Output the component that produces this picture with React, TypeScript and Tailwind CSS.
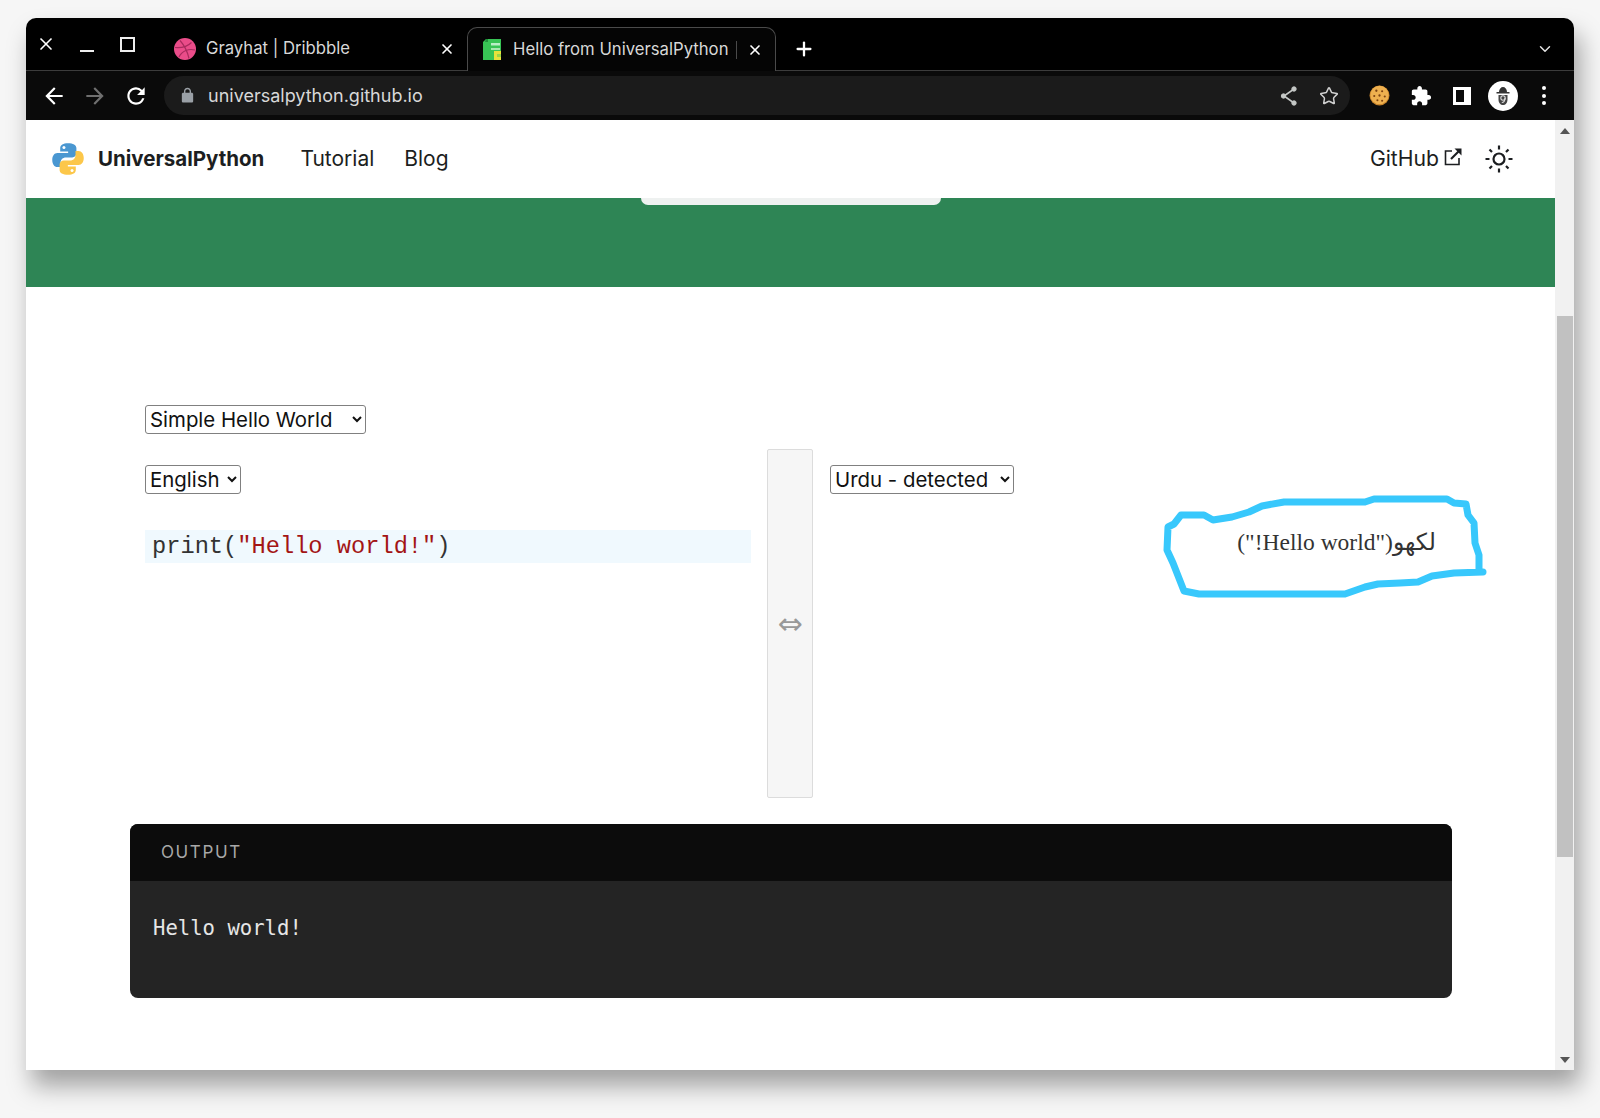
import { ChevronDown, Plus, Star, X } from "lucide-react";

function BackIcon({ className }: { className: string }) {
  return (
    <svg viewBox="0 0 24 24" className={className} fill="currentColor">
      <path d="M20 11H7.83l5.59-5.59L12 4l-8 8 8 8 1.41-1.41L7.83 13H20v-2z" />
    </svg>
  );
}

function ForwardIcon({ className }: { className: string }) {
  return (
    <svg viewBox="0 0 24 24" className={className} fill="currentColor">
      <path d="M12 4l-1.41 1.41L16.17 11H4v2h12.17l-5.58 5.59L12 20l8-8z" />
    </svg>
  );
}

function ReloadIcon({ className }: { className: string }) {
  return (
    <svg viewBox="0 0 24 24" className={className} fill="currentColor">
      <path d="M17.65 6.35A7.958 7.958 0 0 0 12 4c-4.42 0-7.99 3.58-7.99 8s3.57 8 7.99 8c3.73 0 6.84-2.55 7.73-6h-2.08A5.99 5.99 0 0 1 12 18c-3.31 0-6-2.69-6-6s2.69-6 6-6c1.66 0 3.14.69 4.22 1.78L13 11h7V4l-2.35 2.35z" />
    </svg>
  );
}

function LockIcon() {
  return (
    <svg viewBox="0 0 24 24" className="h-[17px] w-[17px] text-[#9aa0a6]" fill="currentColor">
      <path d="M18 8h-1V6c0-2.76-2.24-5-5-5S7 3.24 7 6v2H6c-1.1 0-2 .9-2 2v10c0 1.1.9 2 2 2h12c1.1 0 2-.9 2-2V10c0-1.1-.9-2-2-2zM9 8V6c0-1.66 1.34-3 3-3s3 1.34 3 3v2H9z" />
    </svg>
  );
}

function ShareIcon() {
  return (
    <svg viewBox="0 0 24 24" className="h-6 w-6 text-[#c4c7c5]" fill="currentColor" stroke="currentColor">
      <path d="M17 5 7 12l10 7" fill="none" strokeWidth="1.6" />
      <circle cx="17" cy="5" r="2.2" />
      <circle cx="6.5" cy="12" r="2.2" />
      <circle cx="17" cy="19" r="2.2" />
    </svg>
  );
}

function PuzzleIcon() {
  return (
    <svg viewBox="0 0 24 24" className="h-[22px] w-[22px] text-white" fill="currentColor">
      <path d="M20.5 11H19V7c0-1.1-.9-2-2-2h-4V3.5C13 2.12 11.88 1 10.5 1S8 2.12 8 3.5V5H4c-1.1 0-1.99.9-1.99 2v3.8H3.5c1.49 0 2.7 1.21 2.7 2.7s-1.21 2.7-2.7 2.7H2V20c0 1.1.9 2 2 2h3.8v-1.5c0-1.49 1.21-2.7 2.7-2.7 1.49 0 2.7 1.21 2.7 2.7V22H17c1.1 0 2-.9 2-2v-4h1.5c1.38 0 2.5-1.12 2.5-2.5S21.88 11 20.5 11z" />
    </svg>
  );
}

function CookieIcon() {
  return (
    <svg viewBox="0 0 20 20" className="h-[21px] w-[21px]">
      <circle cx="10" cy="10" r="9.5" fill="#c9852c" />
      <circle cx="10" cy="9.500" r="8.700" fill="#eeb04f" />
      <g fill="#7d4312">
        <circle cx="7" cy="5.500" r="1.100" />
        <circle cx="12.500" cy="6" r="1" />
        <circle cx="5" cy="10.500" r="1" />
        <circle cx="10" cy="10" r="1.100" />
        <circle cx="15" cy="11" r="1" />
        <circle cx="8" cy="14.500" r="1" />
        <circle cx="12.500" cy="15" r="1" />
      </g>
    </svg>
  );
}

function AvatarIcon() {
  return (
    <svg viewBox="0 0 30 30" className="h-[30px] w-[30px]">
      <circle cx="15" cy="15" r="15" fill="#fff" />
      <path d="M11 11c0-3 2-5 4-5s4 2 4 5h2.500v1.600h-13V11z" fill="#333" />
      <path d="M10.500 14h9v4.500c0 3.500-2 5.500-4.500 5.500s-4.500-2-4.500-5.500z" fill="#444" />
      <circle cx="15" cy="17" r="2.200" fill="none" stroke="#ddd" strokeWidth="1.100" />
      <path d="M17 17c0 3-1 4.500-3.200 4.500" fill="none" stroke="#ddd" strokeWidth="1.100" />
    </svg>
  );
}

function DribbbleIcon() {
  return (
    <svg viewBox="0 0 22 22" className="h-[22px] w-[22px]" fill="none">
      <circle cx="11" cy="11" r="11" fill="#ea4c89" />
      <g stroke="#a82a5d" strokeWidth="1.200">
        <path d="M6 2.500c4 4.500 7.500 11 9 18" />
        <path d="M1 9.500c6 .5 12-.5 16.500-5" />
        <path d="M21 12c-6-1.500-13 .5-16 7" />
      </g>
    </svg>
  );
}

function BookIcon() {
  return (
    <svg viewBox="0 0 20 21" className="h-[21px] w-[20px]">
      <path d="M1 3 4 0h15v21H1z" fill="#38c455" />
      <path d="M4 0h2v3H3z" fill="#1f8f3a" />
      <path d="M9 4h9v2.500H9z" fill="#b9eec6" />
      <path d="M9 9h9v2H9z" fill="#a8e8b0" />
      <path d="M12 12h7v9h-7z" fill="#e6e23c" />
      <path d="M15 15h4v3h-4z" fill="#9ad648" />
    </svg>
  );
}

function PythonLogo() {
  return (
    <svg viewBox="0 0 24 24" className="h-[36px] w-[36px]">
      <path
        d="M12 1.500c-3.200 0-5.200 1.100-5.200 3.200v2.300h5.300v1H4.900C2.900 8 1.500 9.900 1.500 12.600s1.400 4.700 3.400 4.700h2.100v-2.800c0-2 1.600-3.500 3.500-3.500h4.300c1.600 0 2.800-1.300 2.800-2.800V4.700c0-2.100-2.200-3.200-5.600-3.200z"
        fill="#4a97d1"
      />
      <path
        d="M12 22.500c3.200 0 5.200-1.100 5.200-3.200V17h-5.300v-1h7.200c2 0 3.400-1.900 3.400-4.600s-1.400-4.700-3.400-4.700H17v2.800c0 2-1.600 3.500-3.500 3.500H9.200c-1.600 0-2.800 1.300-2.800 2.800v3.500c0 2.100 2.200 3.200 5.600 3.200z"
        fill="#fcc74a"
      />
      <circle cx="9.300" cy="4.400" r="1" fill="#fff" />
      <circle cx="14.700" cy="19.600" r="1" fill="#fff" />
    </svg>
  );
}

function ExternalIcon() {
  return (
    <svg viewBox="0 0 20 20" className="h-[20px] w-[20px] text-[#1c1e21]" fill="none" stroke="currentColor">
      <path d="M9 4H2.500v13.500H16V11" strokeWidth="1.600" />
      <path d="M8 12 17 3" strokeWidth="2.200" />
      <path d="M11.500 1.500h7v7z" fill="currentColor" stroke="none" />
    </svg>
  );
}

function ThemeSun() {
  return (
    <svg viewBox="0 0 30 30" className="h-[30px] w-[30px] text-[#1c1e21]" fill="none" stroke="currentColor" strokeWidth="2.200">
      <circle cx="15" cy="15" r="5.500" />
      <path d="M15 1.500v4M15 24.500v4M1.500 15h4M24.500 15h4M5.500 5.500l2.500 2.500M22 22l2.500 2.500M5.500 24.500 8 22M22 8l2.500-2.500" />
    </svg>
  );
}

function TabStrip() {
  return (
    <div className="flex h-[53px] items-end border-b border-[#3c3c3c] bg-black text-white">
      <div className="flex h-full items-center pl-[10px]">
        <X className="h-[20px] w-[20px]" strokeWidth={2} />
        <div className="ml-[24px] mt-[14px] h-[2px] w-[14px] bg-[#eee]" />
        <div className="ml-[26px] h-[15px] w-[15px] border-2 border-[#eee]" />
      </div>
      <div className="ml-[39px] flex h-[43px] w-[293px] items-center">
        <DribbbleIcon />
        <span className="ml-[10px] text-[16.700px] text-[#d8d8d8]">Grayhat | Dribbble</span>
        <X className="ml-auto mr-[12px] h-[16px] w-[16px]" strokeWidth={2.500} />
      </div>
      <div className="relative -mb-px flex h-[44px] w-[309px] items-center rounded-t-[10px] border border-b-0 border-[#4a4a4a] bg-[#050505] pl-[14px]">
        <BookIcon />
        <span className="ml-[11px] w-[218px] overflow-hidden whitespace-nowrap text-[16.700px] text-[#d8d8d8]">
          Hello from UniversalPython
        </span>
        <div className="ml-[5px] h-[18px] w-px bg-[#4a4a4a]" />
        <X className="ml-[10px] h-[16px] w-[16px]" strokeWidth={2.500} />
      </div>
      <div className="ml-[17px] flex h-[43px] items-center">
        <Plus className="h-[22px] w-[22px]" strokeWidth={2.500} />
      </div>
      <div className="ml-auto mr-[20px] flex h-[43px] items-center">
        <ChevronDown className="h-[18px] w-[18px] text-[#e0e0e0]" strokeWidth={2} />
      </div>
    </div>
  );
}

function Toolbar() {
  return (
    <div className="flex h-[49px] items-center bg-[#0a0a0a]">
      <BackIcon className="ml-[15px] h-[26px] w-[26px] text-white" />
      <ForwardIcon className="ml-[15px] h-[26px] w-[26px] text-[#6f6f6f]" />
      <ReloadIcon className="ml-[15px] h-[26px] w-[26px] text-white" />
      <div className="ml-[15px] flex h-[39px] w-[1186px] items-center rounded-full bg-[#1b1b1b] pl-[15px]">
        <LockIcon />
        <span className="ml-[12px] text-[18px] text-[#d8d8d8]">universalpython.github.io</span>
        <div className="ml-auto mr-[11px] flex items-center gap-[18px]">
          <ShareIcon />
          <Star className="h-[20px] w-[20px] text-[#d0d0d0]" strokeWidth={1.800} />
        </div>
      </div>
      <div className="ml-[19px] flex items-center">
        <CookieIcon />
        <div className="ml-[20px]">
          <PuzzleIcon />
        </div>
        <div className="ml-[21px] flex h-[18px] w-[18px] justify-start border-[3px] border-white">
          <div className="h-full w-[8px]" />
          <div className="h-full w-[4px] bg-white" />
        </div>
        <div className="ml-[17px]">
          <AvatarIcon />
        </div>
        <div className="ml-[24px] flex flex-col gap-[3.500px]">
          <div className="h-[4px] w-[4px] rounded-full bg-white" />
          <div className="h-[4px] w-[4px] rounded-full bg-white" />
          <div className="h-[4px] w-[4px] rounded-full bg-white" />
        </div>
      </div>
    </div>
  );
}

function SiteNav() {
  return (
    <div className="flex h-[78px] items-center bg-white pl-[24px] pr-[41px] text-[#1c1e21]">
      <PythonLogo />
      <span className="ml-[12px] text-[20.500px] font-bold">UniversalPython</span>
      <span className="ml-[36px] text-[21px]">Tutorial</span>
      <span className="ml-[30px] text-[21px]">Blog</span>
      <span className="ml-auto text-[21.200px]">GitHub</span>
      <div className="mb-[4px] ml-[4px]">
        <ExternalIcon />
      </div>
      <div className="ml-[21px]">
        <ThemeSun />
      </div>
    </div>
  );
}

function Hero() {
  return (
    <div className="flex h-[89px] justify-center bg-[#2e8555]">
      <div className="h-[7px] w-[300px] rounded-b-[8px] bg-[#eef1f0]" />
    </div>
  );
}

function Annotation() {
  // hand-drawn marker ring, coordinates are page pixels
  return (
    <svg
      viewBox="830 449 622 349"
      className="pointer-events-none absolute left-0 top-0 h-[349px] w-[622px] overflow-visible"
      fill="none"
    >
      <path
        d="M1168 527 L1174 524 L1181 515 L1204 515 L1213 520 L1232 517 L1249 512 L1262 506 L1284 502 L1365 502 L1374 499 L1447 499 L1454 503 L1466 504 L1468 515 L1474 523 L1475 543 L1479 555 L1479 572 L1483 572 L1454 573 L1432 576 L1418 582 L1400 583 L1378 584 L1365 587 L1345 594 L1199 594 L1184 591 L1173 563 L1167 550 Z"
        stroke="#38c8fc"
        strokeWidth="7"
        strokeLinejoin="round"
        strokeLinecap="round"
      />
    </svg>
  );
}

function Workspace() {
  return (
    <div className="pl-[104px] pr-[103px] pt-[118px]">
      <div className="pl-[15px]">
        <select className="h-[29px] w-[221px] rounded-[3px] border border-[#808080] bg-white text-[20.400px] text-[#111]">
          <option>Simple Hello World</option>
        </select>
      </div>
      <div className="mt-[15px] flex h-[349px] pl-[15px]">
        <div className="w-[606px] pt-[16px]">
          <select className="h-[29px] w-[96px] rounded-[3px] border border-[#808080] bg-white text-[20.400px] text-[#111]">
            <option>English</option>
          </select>
          <div className="mt-[36px] flex h-[33px] items-center bg-[#f0f9fe] pl-[7px] font-['Liberation_Mono',monospace] text-[23.700px] text-[#333]">
            print(<span className="text-[#a31515]">"Hello world!"</span>)
          </div>
        </div>
        <div className="ml-[16px] mr-[17px] flex w-[46px] items-center justify-center rounded-[2px] border border-[#dcdcdc] bg-[#f6f6f6] text-[#999]">
          <span className="font-['DejaVu_Sans',sans-serif] text-[30px] leading-none">⇔</span>
        </div>
        <div className="relative flex-1 pt-[16px]">
          <select className="h-[29px] w-[184px] rounded-[3px] border border-[#808080] bg-white text-[20.400px] text-[#111]">
            <option>Urdu - detected</option>
          </select>
          <p
            dir="rtl"
            className="mt-[33px] pr-[16px] text-right font-['Liberation_Serif','DejaVu_Sans',serif] text-[23.500px] leading-[30px] text-[#333]"
          >
            لکھو("Hello world!")
          </p>
          <Annotation />
        </div>
      </div>
      <div className="mt-[26px] overflow-hidden rounded-[8px] bg-[#242424]">
        <div className="flex h-[57px] items-center bg-[#0c0c0c] pl-[31px] pt-px text-[17px] tracking-[1.600px] text-[#a8a8a8]">
          OUTPUT
        </div>
        <div className="h-[117px] pl-[23px] pt-[33px] font-['DejaVu_Sans_Mono',monospace] text-[20.600px] leading-[28px] text-[#e6e6e6]">
          Hello world!
        </div>
      </div>
    </div>
  );
}

function Scrollbar() {
  return (
    <div className="flex w-[19px] flex-col items-center bg-[#f1f1f1] pb-[7px] pt-[8px]">
      <div className="h-0 w-0 border-x-[5px] border-b-[6px] border-x-transparent border-b-[#555]" />
      <div className="ml-px mt-[182px] h-[541px] w-[16px] bg-[#c1c1c1]" />
      <div className="mt-auto h-0 w-0 border-x-[5px] border-t-[6px] border-x-transparent border-t-[#555]" />
    </div>
  );
}

export default function App() {
  return (
    <div className="h-[1118px] w-[1600px] overflow-hidden bg-[#f6f6f6] pl-[26px] pt-[18px] font-['Inter',sans-serif]">
      <div className="flex h-[1052px] w-[1548px] flex-col overflow-hidden rounded-t-[10px] shadow-[6px_16px_24px_rgba(0,0,0,0.35)]">
        <TabStrip />
        <Toolbar />
        <div className="flex min-h-0 flex-1">
          <div className="min-w-0 flex-1 bg-white">
            <SiteNav />
            <Hero />
            <Workspace />
          </div>
          <Scrollbar />
        </div>
      </div>
    </div>
  );
}
